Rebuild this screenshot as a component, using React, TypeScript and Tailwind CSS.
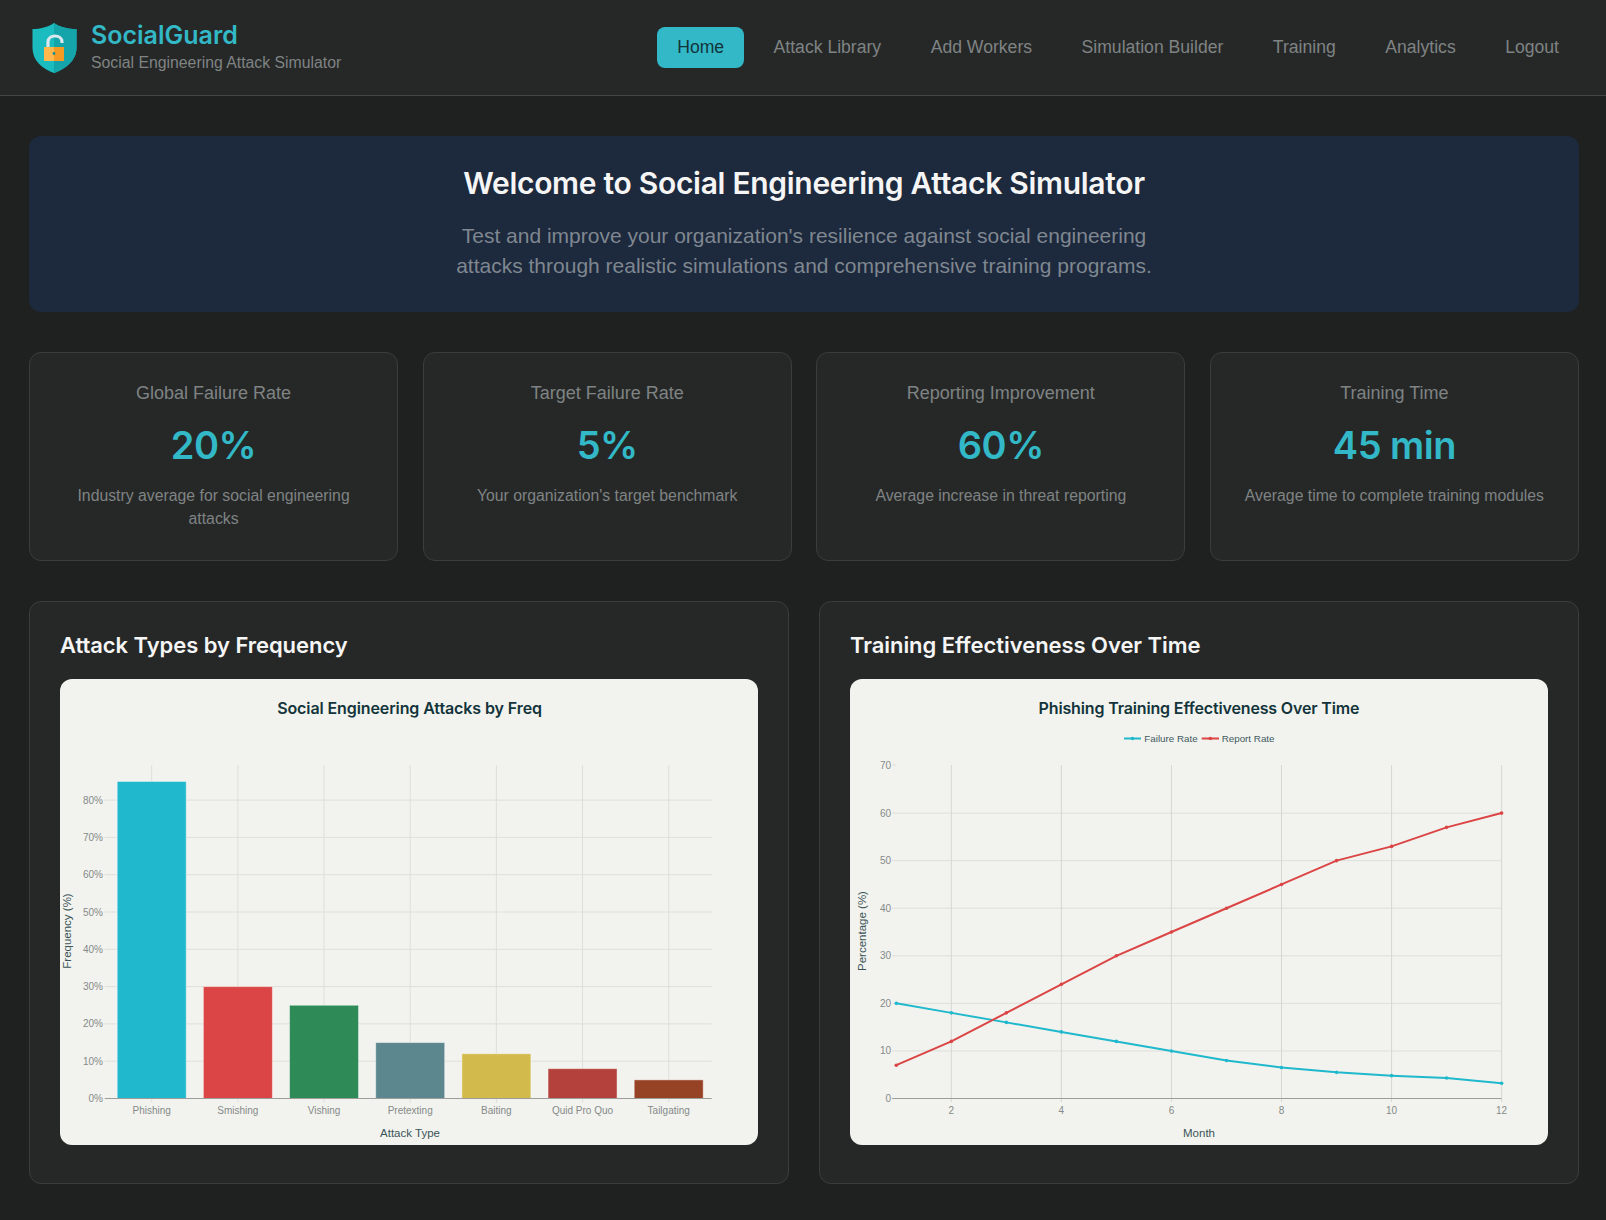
import React from 'react';

const navItems = ['Home', 'Attack Library', 'Add Workers', 'Simulation Builder', 'Training', 'Analytics', 'Logout'];

const stats = [
  { label: 'Global Failure Rate', value: '20%', note: 'Industry average for social engineering attacks' },
  { label: 'Target Failure Rate', value: '5%', note: "Your organization's target benchmark" },
  { label: 'Reporting Improvement', value: '60%', note: 'Average increase in threat reporting' },
  { label: 'Training Time', value: '45 min', note: 'Average time to complete training modules' },
];

const attacks = [
  { name: 'Phishing', value: 85, color: '#1fb8cd' },
  { name: 'Smishing', value: 30, color: '#db4545' },
  { name: 'Vishing', value: 25, color: '#2e8b57' },
  { name: 'Pretexting', value: 15, color: '#5d878f' },
  { name: 'Baiting', value: 12, color: '#d2ba4c' },
  { name: 'Quid Pro Quo', value: 8, color: '#b4413c' },
  { name: 'Tailgating', value: 5, color: '#964325' },
];

const failureRate = [20, 18, 16, 14, 12, 10, 8, 6.5, 5.5, 4.8, 4.3, 3.2];
const reportRate = [7, 12, 18, 24, 30, 35, 40, 45, 50, 53, 57, 60];

const gridColor = '#dfdfda';
const tickColor = '#858a8a';
const titleColor = '#13343b';
const axisTitleColor = '#3a5359';
const chartFont = '"Liberation Sans", sans-serif';
const headingFont = 'Inter, sans-serif';

const ShieldLogo = () => (
  <svg width="46" height="52" viewBox="0 0 46 52" className="shrink-0">
    <path d="M22 1 C 28 5, 36 7, 44.5 7 V 26 C 44.5 38, 34 47, 22 51 C 10 47, 0.5 38, 0.5 26 V 7 C 8 7, 16 5, 22 1 Z" fill="#1abcbf" />
    <path d="M22 1 C 28 5, 36 7, 44.5 7 V 26 C 44.5 38, 34 47, 22 51 Z" fill="#15a4a9" />
    <path d="M16 26 V 20 C 16 12, 30 12, 30 20 V 21" fill="none" stroke="#dbe7ef" strokeWidth="3.2" />
    <rect x="12" y="25" width="20" height="14" fill="#ffb84d" />
    <rect x="22" y="25" width="10" height="14" fill="#f59a23" />
    <circle cx="22" cy="31.5" r="1.4" fill="#168f95" />
  </svg>
);

const BarChart = () => {
  const x0 = 108.7;
  const x1 = 711.7;
  const yBase = 1098.5;
  const yTop = 765;
  const unit = 3.73;
  const center = (i: number) => 151.7 + i * 86.17;
  return (
    <svg viewBox="60 679 698 466" className="block h-[466px] w-full" fontFamily={chartFont}>
      <text
        x="409.5"
        y="713.5"
        textAnchor="middle"
        fontFamily={headingFont}
        fontSize="16"
        fontWeight="600"
        letterSpacing="-0.1"
        fill={titleColor}
      >
        Social Engineering Attacks by Freq
      </text>
      {[10, 20, 30, 40, 50, 60, 70, 80].map((v) => (
        <line key={v} x1={x0 - 4} x2={x1} y1={yBase - v * unit} y2={yBase - v * unit} stroke={gridColor} />
      ))}
      {attacks.map((a, i) => (
        <line key={a.name} x1={center(i)} x2={center(i)} y1={yTop} y2={yBase + 4} stroke={gridColor} />
      ))}
      {attacks.map((a, i) => (
        <rect
          key={a.name}
          x={center(i) - 34.5}
          y={yBase - a.value * unit}
          width={69}
          height={a.value * unit}
          fill={a.color}
          stroke="#ffffff"
          strokeOpacity="0.45"
        />
      ))}
      <line x1={x0 - 4} x2={x1} y1={yBase} y2={yBase} stroke="#9b9d9b" strokeWidth="1" />
      {[0, 10, 20, 30, 40, 50, 60, 70, 80].map((v) => (
        <text key={v} x="103" y={yBase - v * unit + 3.5} textAnchor="end" fontSize="10" fill={tickColor}>
          {v}%
        </text>
      ))}
      {attacks.map((a, i) => (
        <text key={a.name} x={center(i)} y="1113.5" textAnchor="middle" fontSize="10" fill={tickColor}>
          {a.name}
        </text>
      ))}
      <text x="410" y="1137" textAnchor="middle" fontSize="11.5" fill={axisTitleColor}>
        Attack Type
      </text>
      <text x="71" y="931" textAnchor="middle" fontSize="11.5" fill={axisTitleColor} transform="rotate(-90 71 931)">
        Frequency (%)
      </text>
    </svg>
  );
};

const LineChart = () => {
  const xAt = (month: number) => 896.3 + (month - 1) * 55.03;
  const yAt = (v: number) => 1098.5 - v * 4.757;
  const points = (data: number[]) => data.map((v, i) => `${xAt(i + 1)},${yAt(v)}`).join(' ');
  const series = [
    { data: failureRate, color: '#1fb8cd' },
    { data: reportRate, color: '#db4545' },
  ];
  return (
    <svg viewBox="850 679 698 466" className="block h-[466px] w-full" fontFamily={chartFont}>
      <text
        x="1199"
        y="713.5"
        textAnchor="middle"
        fontFamily={headingFont}
        fontSize="16"
        fontWeight="600"
        letterSpacing="-0.15"
        fill={titleColor}
      >
        Phishing Training Effectiveness Over Time
      </text>

      <line x1="1124" x2="1141" y1="738.5" y2="738.5" stroke="#1fb8cd" strokeWidth="2" />
      <circle cx="1132.5" cy="738.5" r="1.8" fill="#1fb8cd" />
      <text x="1144.3" y="742" fontSize="9.8" fill="#3f5a60">Failure Rate</text>
      <line x1="1201.7" x2="1219" y1="738.5" y2="738.5" stroke="#db4545" strokeWidth="2" />
      <circle cx="1210.3" cy="738.5" r="1.8" fill="#db4545" />
      <text x="1221.7" y="742" fontSize="9.8" fill="#3f5a60">Report Rate</text>

      {[10, 20, 30, 40, 50, 60].map((v) => (
        <line key={v} x1="892" x2="1501.5" y1={yAt(v)} y2={yAt(v)} stroke={gridColor} />
      ))}
      <line x1="892" x2="896" y1="765" y2="765" stroke={gridColor} />
      {[2, 4, 6, 8, 10, 12].map((m) => (
        <line key={m} x1={xAt(m)} x2={xAt(m)} y1="765" y2="1102" stroke="#d6d7d3" />
      ))}
      <line x1="892" x2="1501.5" y1="1098.5" y2="1098.5" stroke="#9b9d9b" />

      {series.map((s) => (
        <g key={s.color}>
          <polyline points={points(s.data)} fill="none" stroke={s.color} strokeWidth="2" />
          {s.data.map((v, i) => (
            <circle key={i} cx={xAt(i + 1)} cy={yAt(v)} r="1.8" fill={s.color} />
          ))}
        </g>
      ))}

      {[0, 10, 20, 30, 40, 50, 60, 70].map((v) => (
        <text key={v} x="891" y={yAt(v) + 3.5} textAnchor="end" fontSize="10" fill={tickColor}>
          {v}
        </text>
      ))}
      {[2, 4, 6, 8, 10, 12].map((m) => (
        <text key={m} x={xAt(m)} y="1113.5" textAnchor="middle" fontSize="10" fill={tickColor}>
          {m}
        </text>
      ))}
      <text x="1199" y="1137" textAnchor="middle" fontSize="11.5" fill={axisTitleColor}>
        Month
      </text>
      <text x="866" y="931" textAnchor="middle" fontSize="11.5" fill={axisTitleColor} transform="rotate(-90 866 931)">
        Percentage (%)
      </text>
    </svg>
  );
};

const App: React.FC = () => {
  return (
    <div className="min-h-[1220px] bg-[#1f2121] font-['Liberation_Sans',sans-serif] text-[#f5f5f5]">
      {/* Header */}
      <header className="flex h-[96px] items-center justify-between border-b border-[#444646] bg-[#262828] pl-[32px] pr-[27px]">
        <div className="flex items-center gap-[13px]">
          <ShieldLogo />
          <div className="mb-[2px]">
            <h1 className="font-['Inter',sans-serif] text-[25px] leading-[30px] font-semibold text-[#32b8c6]">SocialGuard</h1>
            <p className="mt-[2px] text-[15.8px] leading-[22px] text-[#7f8383]">Social Engineering Attack Simulator</p>
          </div>
        </div>
        <nav className="flex items-center gap-[9.5px]">
          {navItems.map((item, i) => (
            <a
              key={item}
              className={
                i === 0
                  ? 'rounded-[8px] bg-[#32b8c6] px-[20px] py-[9px] text-[17.6px] leading-[23px] text-[#13343b]'
                  : 'rounded-[8px] px-[20px] py-[9px] text-[17.6px] leading-[23px] text-[#7f8383]'
              }
            >
              {item}
            </a>
          ))}
        </nav>
      </header>

      <main className="pl-[29px] pr-[27px] pt-[40px]">
        {/* Hero */}
        <section className="flex h-[176px] flex-col items-center rounded-[12px] bg-[#1d293d] pt-[27px] text-center">
          <h2 className="font-['Inter',sans-serif] text-[30px] leading-[40px] font-semibold tracking-[-0.3px] text-[#f5f5f5]">
            Welcome to Social Engineering Attack Simulator
          </h2>
          <p className="mt-[18px] max-w-[720px] text-[21px] leading-[30px] text-[#7f8790]">
            Test and improve your organization's resilience against social engineering attacks through realistic
            simulations and comprehensive training programs.
          </p>
        </section>

        {/* Stats */}
        <section className="mt-[40px] grid grid-cols-4 gap-[24.5px]">
          {stats.map((s) => (
            <div
              key={s.label}
              className="h-[209px] rounded-[12px] border border-[#3b3d3d] bg-[#262828] px-[24px] pt-[28px] text-center"
            >
              <h3 className="text-[18px] leading-[24px] font-medium text-[#7f8383]">{s.label}</h3>
              <div className="mt-[14px] font-['Inter',sans-serif] text-[38px] leading-[52px] font-semibold tracking-[-0.5px] text-[#32b8c6]">
                {s.value}
              </div>
              <p className="mt-[14px] text-[15.8px] leading-[22.5px] text-[#7f8383]">{s.note}</p>
            </div>
          ))}
        </section>

        {/* Charts */}
        <section className="mt-[40px] grid grid-cols-2 gap-[30px]">
          <div className="h-[583px] rounded-[12px] border border-[#3b3d3d] bg-[#262828] px-[30px] pt-[27px]">
            <h3 className="font-['Inter',sans-serif] text-[22px] leading-[32px] font-semibold tracking-[-0.05px] text-[#f5f5f5]">
              Attack Types by Frequency
            </h3>
            <div className="mt-[18px] overflow-hidden rounded-[12px] bg-[#f2f3ee]">
              <BarChart />
            </div>
          </div>
          <div className="h-[583px] rounded-[12px] border border-[#3b3d3d] bg-[#262828] px-[30px] pt-[27px]">
            <h3 className="font-['Inter',sans-serif] text-[22px] leading-[32px] font-semibold tracking-[-0.05px] text-[#f5f5f5]">
              Training Effectiveness Over Time
            </h3>
            <div className="mt-[18px] overflow-hidden rounded-[12px] bg-[#f2f3ee]">
              <LineChart />
            </div>
          </div>
        </section>
      </main>
    </div>
  );
};

export default App;
